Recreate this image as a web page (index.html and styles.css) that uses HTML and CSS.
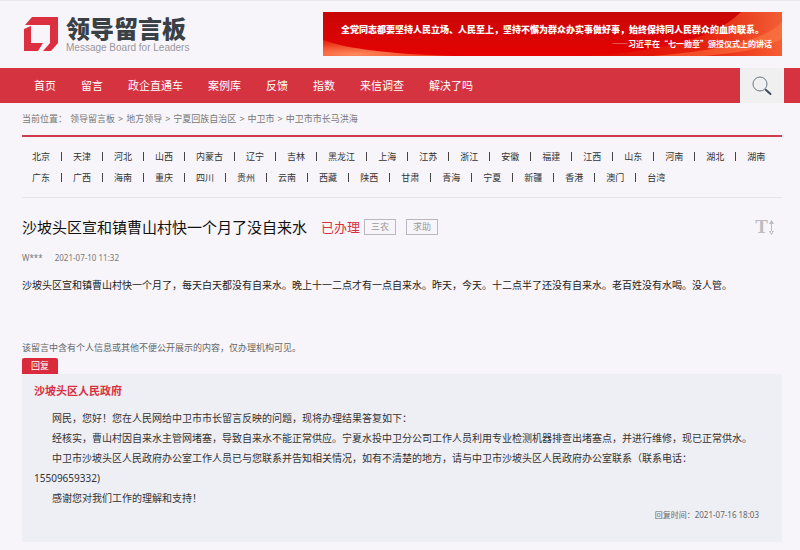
FILE: index.html
```
<!DOCTYPE html>
<html lang="zh-CN">
<head>
<meta charset="utf-8">
<title>领导留言板</title>
<link rel="stylesheet" href="styles.css">
</head>
<body>
<header class="header">
  <a class="logo" href="#">
    <svg class="logo-mark" viewBox="0 0 34 34" aria-hidden="true">
      <path fill="#dc3040" d="M8 0H34V26L27 34H19L26 26V8H1Z"/>
      <path fill="#dc3040" d="M0 12L7 9V26H19L14 34H0Z"/>
    </svg>
    <span class="logo-text">
      <span class="logo-name">领导留言板</span>
      <span class="logo-sub">Message Board for Leaders</span>
    </span>
  </a>
  <div class="banner">
    <svg class="banner-art" viewBox="0 0 459 44" preserveAspectRatio="none" aria-hidden="true">
      <defs>
        <linearGradient id="base" x1="0" y1="0" x2="0" y2="1"><stop offset="0" stop-color="#c80606"/><stop offset="1" stop-color="#e60202"/></linearGradient>
        <radialGradient id="glow" cx="0.25" cy="0.9" r="0.8"><stop offset="0" stop-color="#ff8a5c"/><stop offset="1" stop-color="#ea2a10"/></radialGradient>
        <linearGradient id="ray" x1="0" y1="0" x2="1" y2="0"><stop offset="0" stop-color="#e00a04"/><stop offset="0.6" stop-color="#e62a10"/><stop offset="1" stop-color="#fb7440"/></linearGradient>
      </defs>
      <rect width="459" height="44" fill="url(#base)"/>
      <path d="M0 28Q35 41 130 44H0Z" fill="url(#glow)"/>
      <path d="M418 0H459V44H260Q380 38 418 0Z" fill="url(#ray)" opacity="0.8"/>
      <path d="M459 10Q435 36 330 44H380Q435 40 459 27Z" fill="#ff8048" opacity="0.5"/>
    </svg>
    <p class="banner-title">全党同志都要坚持人民立场、人民至上，坚持不懈为群众办实事做好事，始终保持同人民群众的血肉联系。</p>
    <p class="banner-source">——习近平在“七一勋章”颁授仪式上的讲话</p>
  </div>
</header>

<nav class="nav">
  <ul class="nav-list">
    <li><a href="#">首页</a></li>
    <li><a href="#">留言</a></li>
    <li><a href="#">政企直通车</a></li>
    <li><a href="#">案例库</a></li>
    <li><a href="#">反馈</a></li>
    <li><a href="#">指数</a></li>
    <li><a href="#">来信调查</a></li>
    <li><a href="#">解决了吗</a></li>
  </ul>
  <button class="search" type="button" aria-label="搜索">
    <svg viewBox="0 0 20 20" aria-hidden="true">
      <circle cx="8" cy="8" r="7" fill="none" stroke="#6c7784" stroke-width="1"/>
      <path d="M13 13L14.500 14.500" stroke="#6c7784" stroke-width="1"/>
      <path d="M14 14L18.500 18" stroke="#3d4b5c" stroke-width="2" stroke-linecap="round"/>
    </svg>
  </button>
</nav>

<main class="page">
  <div class="crumbs">
    <span>当前位置：</span>
    <a href="#">领导留言板</a><span>&gt;</span>
    <a href="#">地方领导</a><span>&gt;</span>
    <a href="#">宁夏回族自治区</a><span>&gt;</span>
    <a href="#">中卫市</a><span>&gt;</span>
    <a href="#">中卫市市长马洪海</a>
  </div>

  <div class="regions">
    <ul class="region-row">
      <li><a href="#">北京</a></li><li><a href="#">天津</a></li><li><a href="#">河北</a></li><li><a href="#">山西</a></li><li><a href="#">内蒙古</a></li><li><a href="#">辽宁</a></li><li><a href="#">吉林</a></li><li><a href="#">黑龙江</a></li><li><a href="#">上海</a></li><li><a href="#">江苏</a></li><li><a href="#">浙江</a></li><li><a href="#">安徽</a></li><li><a href="#">福建</a></li><li><a href="#">江西</a></li><li><a href="#">山东</a></li><li><a href="#">河南</a></li><li><a href="#">湖北</a></li><li><a href="#">湖南</a></li>
    </ul>
    <ul class="region-row">
      <li><a href="#">广东</a></li><li><a href="#">广西</a></li><li><a href="#">海南</a></li><li><a href="#">重庆</a></li><li><a href="#">四川</a></li><li><a href="#">贵州</a></li><li><a href="#">云南</a></li><li><a href="#">西藏</a></li><li><a href="#">陕西</a></li><li><a href="#">甘肃</a></li><li><a href="#">青海</a></li><li><a href="#">宁夏</a></li><li><a href="#">新疆</a></li><li><a href="#">香港</a></li><li><a href="#">澳门</a></li><li><a href="#">台湾</a></li>
    </ul>
  </div>

  <article class="message">
    <div class="message-head">
      <h1>沙坡头区宣和镇曹山村快一个月了没自来水</h1>
      <span class="status">已办理</span>
      <span class="tag">三农</span>
      <span class="tag">求助</span>
      <button class="text-size" type="button" aria-label="字号">
        <span>T</span>
        <svg viewBox="0 0 5 15" aria-hidden="true"><path d="M2 2H3V13H2ZM0 4L2.500 0L5 4ZM0 11L2.500 15L5 11Z" fill="#bcbcbf"/></svg>
      </button>
    </div>
    <p class="meta"><span>W***</span><time>2021-07-10 11:32</time></p>
    <p class="content">沙坡头区宣和镇曹山村快一个月了，每天白天都没有自来水。晚上十一二点才有一点自来水。昨天，今天。十二点半了还没有自来水。老百姓没有水喝。没人管。</p>
    <p class="notice">该留言中含有个人信息或其他不便公开展示的内容，仅办理机构可见。</p>
  </article>

  <section class="reply">
    <span class="reply-tab">回复</span>
    <div class="reply-box">
      <h2>沙坡头区人民政府</h2>
      <p>网民，您好！您在人民网给中卫市市长留言反映的问题，现将办理结果答复如下：</p>
      <p>经核实，曹山村因自来水主管网堵塞，导致自来水不能正常供应。宁夏水投中卫分公司工作人员利用专业检测机器排查出堵塞点，并进行维修，现已正常供水。</p>
      <p>中卫市沙坡头区人民政府办公室工作人员已与您联系并告知相关情况，如有不清楚的地方，请与中卫市沙坡头区人民政府办公室联系（联系电话：<br>15509659332)</p>
      <p>感谢您对我们工作的理解和支持！</p>
      <div class="reply-time">回复时间：<time>2021-07-16 18:03</time></div>
    </div>
  </section>
</main>
</body>
</html>
```
FILE: styles.css
```
* { box-sizing: border-box; }
body, h1, h2, p, ul { margin: 0; padding: 0; }
ul { list-style: none; }
a { color: inherit; text-decoration: none; }
button { border: 0; padding: 0; cursor: pointer; font: inherit; }

body {
  background: #f7f5f9;
  color: #333;
  font-family: "Noto Sans", "Noto Sans CJK SC", sans-serif;
  font-size: 10px;
  line-height: 20px;
}

.header {
  display: flex;
  justify-content: space-between;
  align-items: flex-start;
  border-top: 1px solid #ebe9ed;
  padding: 11px 18px 12px 24px;
}
.logo { display: flex; gap: 8px; padding-top: 5px; }
.logo-mark { width: 34px; height: 34px; }
.logo-text { display: flex; flex-direction: column; }
.logo-name {
  color: #394046;
  font-family: "Noto Sans CJK SC", sans-serif;
  font-size: 24px;
  font-weight: 900;
  line-height: 22px;
}
.logo-sub {
  padding-top: 3px;
  color: #99979c;
  font-family: "Liberation Sans", sans-serif;
  font-size: 10px;
  line-height: 12px;
}
.banner {
  position: relative;
  width: 459px;
  height: 44px;
  padding: 10px 10px 0;
  color: #fff;
  font-family: "Noto Sans CJK SC", sans-serif;
  text-align: right;
  white-space: nowrap;
}
.banner-art { position: absolute; inset: 0; width: 100%; height: 100%; }
.banner p { position: relative; }
.banner-title { font-size: 9px; font-weight: 900; line-height: 16px; text-align: center; }
.banner-source { font-size: 8px; font-weight: 700; line-height: 12px; }

.nav {
  display: flex;
  justify-content: space-between;
  height: 35px;
  padding: 0 16px 0 34px;
  background: #d63340;
  color: #fff;
}
.nav-list { display: flex; align-items: center; gap: 25px; font-size: 11px; }
.search {
  display: flex;
  align-items: center;
  justify-content: center;
  width: 44px;
  background: #f0f0f0;
  border: solid #f7f5f9;
  border-width: 0 1px;
}
.search svg { width: 20px; height: 20px; }

.page { padding: 0 18px 8px 22px; }
.crumbs {
  display: flex;
  gap: 3px;
  padding: 6px 0;
  border-bottom: 2px solid #cf3c4b;
  color: #777;
  font-size: 9px;
}

.regions {
  padding: 9px 0 9px 10px;
  border-bottom: 1px solid #e6e4e8;
  font-size: 9px;
  line-height: 21px;
}
.region-row { display: flex; white-space: nowrap; }
.region-row li { display: flex; align-items: center; }
.region-row li + li::before {
  content: "";
  width: 1px;
  height: 9px;
  margin: 0 11px;
  background: #444;
}

.message-head { display: flex; align-items: center; padding-top: 17px; line-height: 24px; }
.message-head h1 { color: #111; font-size: 15px; font-weight: 400; }
.status { margin: 0 4px 0 14px; color: #d8303f; font-size: 13px; }
.tag {
  margin-right: 10px;
  padding: 0 6px;
  border: 1px solid #b9b9bd;
  color: #999;
  font-size: 9px;
  line-height: 14px;
}
.text-size {
  display: flex;
  align-items: center;
  gap: 1px;
  margin: 0 8px 0 auto;
  background: none;
  color: #bcbcbf;
  font-family: "Liberation Serif", serif;
  font-size: 19px;
  font-weight: 700;
  line-height: 20px;
}
.text-size svg { width: 5px; height: 15px; }
.meta { display: flex; gap: 12px; padding-top: 9px; color: #777; font-size: 8px; }
.content { padding-top: 7px; color: #222; }
.notice { padding-top: 43px; color: #666; font-size: 9px; }

.reply { display: flex; flex-direction: column; align-items: flex-start; }
.reply-tab {
  padding: 0 9px;
  border-radius: 2px 2px 0 0;
  background: #d92b3b;
  color: #fff;
  font-size: 9px;
  line-height: 16px;
}
.reply-box { align-self: stretch; padding: 7px 23px 20px 12px; background: #eeeff5; }
.reply-box h2 { padding-bottom: 7px; color: #d8303f; font-size: 11px; font-weight: 700; }
.reply-box p { text-indent: 18px; }
.reply-time { color: #666; font-size: 8px; line-height: 14px; text-align: right; }
```
